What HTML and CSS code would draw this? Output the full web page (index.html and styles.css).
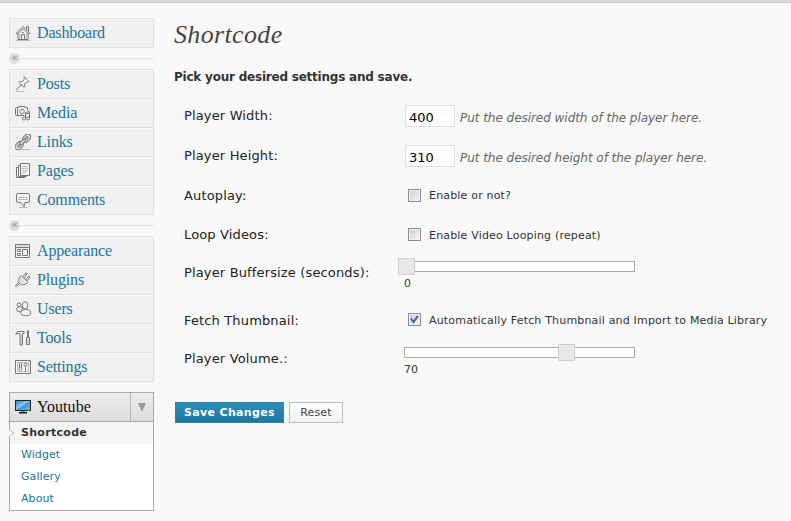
FILE: index.html
```html
<!DOCTYPE html>
<html lang="en">
<head>
<meta charset="utf-8">
<title>Shortcode</title>
<link rel="stylesheet" href="styles.css">
</head>
<body>
<div class="topbar"></div>
<div class="layout">
<nav class="sidebar">
  <ul class="menu">
    <li><svg class="icon" viewBox="0 0 16 16"><path d="M3 8v6.500h10V8M1 8.300L8 1.500l7 6.800-1 1L8 3.800 2 9.300zM11.500 4V1.500h2V6"/><path d="M6.500 14V9.500h3V14M7 7.500h2"/><path class="soft" d="M1 15.500h14M4.500 9v5M11.500 9v5"/></svg><a>Dashboard</a></li>
  </ul>
  <div class="sep"><span>«</span></div>
  <ul class="menu">
    <li><svg class="icon" viewBox="0 0 16 16"><path d="M9.500.8L14 5.500l-1.500.8-1-.3-2 2 .3 2.500-1 .8L4 6.500l.8-1 2.600.2 2-2-.5-1.500zM6 9L.8 14.500"/><path class="soft" d="M11 2.500l2 2.300M6.500 7.500l2 2M1 15.500h8"/></svg><a>Posts</a></li>
    <li><svg class="icon" viewBox="0 0 16 16"><path d="M9.500 10.500h-8Q.5 10.500.5 9.500V3.500Q.5 2.500 1.500 2.500H4V1.500h6v1h2.500v3M2.500 3v7"/><circle cx="7" cy="6.500" r="2.300"/><path d="M10.500 13.500V7.500l4-1v6.500M10.500 8.500h4"/><circle cx="9" cy="13.500" r="1.500"/><circle cx="13" cy="13.500" r="1.500"/></svg><a>Media</a></li>
    <li><svg class="icon links" viewBox="0 0 16 16"><g transform="rotate(-45 8 8)"><rect x="-1.800" y="4.800" width="9" height="6" rx="3"/><rect x="8.800" y="4.800" width="9" height="6" rx="3"/><rect x="1" y="6.900" width="3.500" height="1.800" rx=".9"/><rect x="11.500" y="6.900" width="3.500" height="1.800" rx=".9"/><rect x="4.500" y="6.500" width="7" height="2.600" rx="1.300"/></g><path class="soft" d="M5 15.500h10"/></svg><a>Links</a></li>
    <li><svg class="icon" viewBox="0 0 16 16"><path d="M5.500.5h9v12h-9zM5.500 2.500h-2v11h8v-1M3.500 4.500h-2v10h8v-1"/><path class="soft" d="M7 3.500h6M7 5.500h6M7 7.500h6M7 9.500h4"/></svg><a>Pages</a></li>
    <li><svg class="icon" viewBox="0 0 16 16"><path d="M3 1.500h10q1.500 0 1.500 1.500v6q0 1.500-1.500 1.500h-3L9 14.500 6 10.500H3Q1.500 10.500 1.500 9V3Q1.500 1.500 3 1.500z"/><path class="soft" d="M3 5.500h10M3 7.500h10M4 15.500h8"/></svg><a>Comments</a></li>
  </ul>
  <div class="sep"><span>«</span></div>
  <ul class="menu">
    <li><svg class="icon" viewBox="0 0 16 16"><path d="M.5 1.500h14v13H.5zM.5 4.500h14M2.500 6.500h3v2h-3zM2.500 10.500h3v2h-3zM7.500 6.500h5v6h-5z"/><path class="soft" d="M2 3h11"/></svg><a>Appearance</a></li>
    <li><svg class="icon" viewBox="0 0 16 16"><path d="M6 3.500l7 7Q8 14.500 5 12 2 8.500 6 3.500zM7.500 5L11 .8l1 1L9 6.500M10.500 8L14 4l1 1-3.500 4M4.500 11.500L.8 15M3.700 10.500L0 14"/><path class="soft" d="M5.500 6.500l5 5M4.800 8.500l3.500 3.500"/></svg><a>Plugins</a></li>
    <li><svg class="icon" viewBox="0 0 16 16"><path d="M4 5.500Q1.500 6.500 1.500 8.500 1.500 11 5.500 10.500L8 7z"/><circle cx="4" cy="3.700" r="1.900"/><ellipse cx="10" cy="4.300" rx="2.800" ry="3.700"/><path d="M10.500 8.300q5 0 5 3.400t-5 3-5-3 5-3.400z"/></svg><a>Users</a></li>
    <li><svg class="icon" viewBox="0 0 16 16"><path d="M.8 4.500Q1 1.500 4 1.500h5v2H7.500v11.500h-2.500V3.500Q2 3 .8 4.500zM12.500.5v7M13.500.5v7M11.500 7.500h3v7h-3z"/><path class="soft" d="M6.300 5v9M13 9v5"/></svg><a>Tools</a></li>
    <li><svg class="icon" viewBox="0 0 16 16"><path d="M.5 1.500h15v13H.5z"/><path class="soft" d="M2.500 3.500h11v9h-11z"/><path d="M4.500 4v4M6.500 4v4"/><circle cx="5.500" cy="9.700" r="1.500"/><circle cx="10.500" cy="5.800" r="1.500"/><path d="M10.500 7.500v4.500"/></svg><a>Settings</a></li>
  </ul>
  <section class="open">
    <div class="open-head">
      <svg class="monitor" viewBox="0 0 16 16"><defs><linearGradient id="scr" x1="0" y1="0" x2="1" y2="1"><stop offset="0" stop-color="#2f8ccc"/><stop offset=".48" stop-color="#8dc8ed"/><stop offset=".52" stop-color="#3d97d2"/><stop offset="1" stop-color="#67b7e5"/></linearGradient></defs><path fill="#1b252c" d="M0 1h16v11H0z"/><path fill="url(#scr)" d="M1 2h14v9H1z"/><path fill="#8a9297" d="M6 12h4v1H6z"/><path fill="#151b1f" d="M4 13h8v1.500H4z"/><path fill="#52dc47" d="M13 11h1v1h-1z"/></svg>
      <span class="open-title">Youtube</span><span class="toggle"><i></i></span>
    </div>
    <ul class="submenu">
      <li class="current">Shortcode<svg class="notch" viewBox="0 0 6 8"><path d="M0 .5L5 4 0 7.500"/></svg></li>
      <li>Widget</li><li>Gallery</li><li>About</li>
    </ul>
  </section>
</nav>
<main class="content">
  <h1>Shortcode</h1>
  <h2>Pick your desired settings and save.</h2>
  <form>
    <div class="row"><label>Player Width:</label><input class="num" type="text" value="400"><em>Put the desired width of the player here.</em></div>
    <div class="row"><label>Player Height:</label><input class="num" type="text" value="310"><em>Put the desired height of the player here.</em></div>
    <div class="row"><label>Autoplay:</label><span class="box"></span><span class="note">Enable or not?</span></div>
    <div class="row loop"><label>Loop Videos:</label><span class="box"></span><span class="note">Enable Video Looping (repeat)</span></div>
    <div class="row range buffer"><label>Player Buffersize (seconds):</label><div class="slider"><div class="track"><i class="handle" style="left:-7px"></i></div><span>0</span></div></div>
    <div class="row fetch"><label>Fetch Thumbnail:</label><span class="box"><svg viewBox="0 0 9 9"><path d="M1 3.500L3.500 7 8 .8"/></svg></span><span class="note">Automatically Fetch Thumbnail and Import to Media Library</span></div>
    <div class="row range"><label>Player Volume.:</label><div class="slider"><div class="track"><i class="handle" style="left:153px"></i></div><span>70</span></div></div>
    <div class="actions"><button class="save" type="button">Save Changes</button><button class="reset" type="button">Reset</button></div>
  </form>
</main>
</div>
</body>
</html>
```
FILE: styles.css
```css
* { box-sizing: border-box; }
body { margin: 0; height: 521px; overflow: hidden; background: #f9f9f9; color: #222; font: 13px/16px "DejaVu Sans", sans-serif; }
ul { list-style: none; margin: 0; padding: 0; }
.topbar { height: 3px; background: #d9d9d9; border-bottom: 1px solid #c6c6c6; }
.layout { display: flex; }
.sidebar { width: 145px; margin: 15px 0 0 9px; }
.menu { border: 1px solid #e1e1e1; border-top: 0; background: #f1f1f1; }
.menu li { display: flex; align-items: center; height: 29px; padding-left: 5px; border-top: 1px solid #dfdfdf; box-shadow: inset 0 1px #fcfcfc; }
.icon { width: 16px; height: 16px; margin-right: 6px; fill: #f5f5f5; stroke: #777; stroke-width: 1; flex: none; }
.icon .soft { stroke: #bbb; }
.links rect { fill: #e4e4e4; }
.menu a { color: #21759b; font: 16px/20px "Liberation Serif", serif; letter-spacing: -.15px; white-space: nowrap; }
.sep { display: flex; align-items: center; height: 21px; }
.sep span { width: 11px; height: 11px; border-radius: 50%; background: #dedede; color: #888; font-size: 11px; line-height: 9px; text-align: center; }
.sep::after { content: ""; flex: 1; height: 1px; background: #e3e3e3; }
.open { height: 119px; margin-top: 10px; border: 1px solid #aaa; background: #fff; }
.open-head { display: flex; align-items: center; height: 29px; padding-left: 5px; background: linear-gradient(#ededed, #dcdcdc); border-bottom: 1px solid #aaa; }
.monitor { width: 16px; height: 16px; margin-right: 6px; }
.open-title { flex: 1; color: #111; font: 16px/20px "Liberation Serif", serif; letter-spacing: .05px; }
.toggle { display: flex; align-items: center; justify-content: center; align-self: stretch; width: 23px; border-left: 1px solid #b5b5b5; }
.toggle i { border: 4.5px solid transparent; border-top: 9px solid #999; border-bottom: 0; }
.submenu li { position: relative; height: 22px; padding-left: 11px; color: #21759b; font-size: 11px; line-height: 21px; letter-spacing: .08px; }
.submenu .current { background: #f5f5f5; color: #333; font-weight: bold; letter-spacing: .3px; }
.notch { position: absolute; left: -1px; top: 7px; width: 6px; height: 8px; fill: #f9f9f9; stroke: #bbb; }
.content { margin-left: 20px; flex: 1; }
h1 { margin: 15px 0 0; height: 36px; color: #464646; font: italic 26px/34px "Liberation Serif", serif; letter-spacing: .35px; }
h2 { margin: 14px 0 0; height: 27px; color: #333; font-size: 12px; line-height: 18px; letter-spacing: -.22px; }
form { padding-left: 10px; }
.row { display: flex; align-items: center; height: 40px; white-space: nowrap; }
.row label { width: 221px; padding-top: 2px; flex: none; letter-spacing: .15px; }
.num { width: 50px; height: 22px; margin: 1px 5px 0 0; padding: 3px 4px 0 3px; border: 1px solid #dfdfdf; background: #fff; color: #000; font: 13px/18px "DejaVu Sans", sans-serif; }
.row em { padding-top: 5px; color: #666; font-size: 12px; letter-spacing: -.04px; }
.box { display: flex; width: 13px; height: 13px; margin-left: 3px; border: 1px solid #8e8f8f; padding: 1px; background: linear-gradient(135deg, #ccd0d6, #f4f4f4) content-box, #f2f2f2; }
.box svg { width: 9px; height: 9px; fill: none; stroke: #4a5f97; stroke-width: 2; }
.note { margin-left: 8px; padding-top: 2px; font-size: 11px; color: #333; letter-spacing: .18px; }
.loop { height: 39px; }
.loop label { padding-top: 0; }
.fetch .box { margin-top: -1px; }
.fetch .note { padding-top: 1px; }
.range { height: 37px; align-items: flex-start; padding-top: 7px; }
.range label { padding-top: 4px; }
.buffer { height: 46px; }
.slider { width: 231px; margin-left: -1px; font-size: 11px; color: #333; }
.track { position: relative; height: 11px; margin-bottom: 4px; border: 1px solid #aaa; background: #fff; }
.handle { position: absolute; top: -4px; width: 17px; height: 17px; border: 1px solid #d0d0d0; background: #e8e8e8; }
.actions { display: flex; gap: 5px; margin: 25px 0 0 -9px; }
button { height: 21px; padding: 0; font: 11px/17px "DejaVu Sans", sans-serif; }
.save { width: 109px; border: 1px solid #2684ae; background: linear-gradient(#2a8fbd, #21759b); color: #fff; font-weight: bold; letter-spacing: .33px; }
.reset { width: 54px; border: 1px solid #bbb; background: linear-gradient(#fff, #f2f2f2); color: #464646; letter-spacing: .2px; }
```
